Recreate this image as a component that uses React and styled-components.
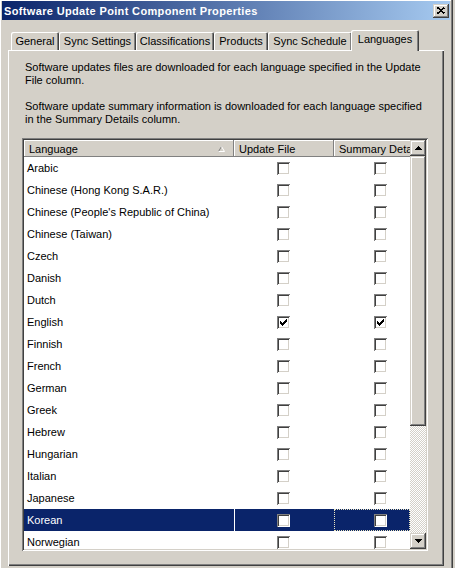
import React from 'react'
import styled, { createGlobalStyle } from 'styled-components'

const GlobalStyle = createGlobalStyle`
  html, body {
    margin: 0;
    padding: 0;
    background: #d4d0c8;
  }
  * {
    box-sizing: border-box;
  }
`

const raised = `
  box-shadow: inset -1px -1px #404040, inset 1px 1px #d4d0c8,
    inset -2px -2px #808080, inset 2px 2px #fff;
`

const Screen = styled.div`
  width: 455px;
  height: 568px;
  overflow: hidden;
  background: #d4d0c8;
  font-family: "Liberation Sans", Arial, sans-serif;
  font-size: 11px;
  color: #000;
`

const Window = styled.div`
  width: 453px;
  height: 100%;
  display: flex;
  flex-direction: column;
  padding: 1px 3px 0 2px;
  box-shadow: inset -1px 0 #404040, inset -2px 0 #808080, inset 1px 1px #fff;
`

const TitleBar = styled.div`
  height: 19px;
  display: flex;
  align-items: center;
  justify-content: space-between;
  padding: 0 1px 0 2px;
  background: linear-gradient(to right, #0a246a, #a6caf0);
`

const Title = styled.span`
  color: #fff;
  font-weight: bold;
  font-size: 11px;
  letter-spacing: 0.35px;
`

const CloseButton = styled.div`
  width: 16px;
  height: 14px;
  background: #d4d0c8;
  display: flex;
  align-items: center;
  justify-content: center;
  ${raised}
`

const TabRow = styled.div`
  display: flex;
  align-items: flex-end;
  height: 21px;
  margin-top: 9px;
  padding-left: 9px;
  position: relative;
  z-index: 1;
`

const Tab = styled.div`
  width: ${p => p.w}px;
  height: ${p => (p.active ? 21 : 18)}px;
  margin-left: ${p => (p.active ? -1 : 0)}px;
  margin-bottom: ${p => (p.active ? -1 : 0)}px;
  display: flex;
  align-items: center;
  justify-content: center;
  padding-bottom: ${p => (p.active ? 3 : 0)}px;
  background: #d4d0c8;
  border-top-left-radius: 2px;
  border-top-right-radius: 2px;
  box-shadow: inset 1px 1px #fff, inset -1px 0 #404040, inset -2px 0 #808080;
`

const Panel = styled.div`
  width: 436px;
  margin-left: 6px;
  flex: 1;
  margin-bottom: 2px;
  padding: 11px 0 0 14px;
  box-shadow: inset 1px 1px #fff, inset -1px -1px #404040, inset -2px -2px #808080;
`

const Para = styled.p`
  margin: 0 0 ${p => p.gap}px 0;
  padding-left: 3px;
  line-height: 13px;
  width: 400px;
`

const ListView = styled.div`
  width: 406px;
  height: 413px;
  display: flex;
  padding: 2px;
  background: #fff;
  box-shadow: inset 1px 1px #808080, inset -1px -1px #fff,
    inset 2px 2px #404040, inset -2px -2px #d4d0c8;
`

const Table = styled.div`
  width: 386px;
  overflow: hidden;
  display: flex;
  flex-direction: column;
`

const HeaderRow = styled.div`
  display: flex;
  height: 17px;
  flex-shrink: 0;
`

const HeaderCell = styled.div`
  width: ${p => p.w}px;
  flex-shrink: 0;
  display: flex;
  align-items: center;
  justify-content: space-between;
  padding: 0 9px 0 5px;
  background: #d4d0c8;
  white-space: nowrap;
  overflow: hidden;
  box-shadow: inset -1px -1px #808080, inset 1px 1px #fff;
`

const Row = styled.div`
  display: flex;
  height: 22px;
  flex-shrink: 0;
`

const Cell = styled.div`
  width: ${p => p.w}px;
  flex-shrink: 0;
  display: flex;
  align-items: center;
  padding-left: ${p => p.pad}px;
  background: ${p => (p.selected ? '#0a246a' : '#fff')};
  color: ${p => (p.selected ? '#fff' : '#000')};
  ${p => (p.divider ? 'box-shadow: inset 1px 0 #fff;' : '')}
  ${p => (p.focus ? 'outline: 1px dotted #e8e4c0; outline-offset: -1px;' : '')}
`

const Box = styled.div`
  width: 13px;
  height: 13px;
  background: #fff;
  position: relative;
  box-shadow: inset 1px 1px #808080, inset -1px -1px #fff,
    inset 2px 2px #404040, inset -2px -2px #d4d0c8;
`

const ScrollBar = styled.div`
  width: 16px;
  display: flex;
  flex-direction: column;
  background: repeating-conic-gradient(#d4d0c8 0 25%, #fff 0 50%) 0 0 / 2px 2px;
`

const ScrollButton = styled.div`
  height: 16px;
  flex-shrink: 0;
  background: #d4d0c8;
  display: flex;
  align-items: center;
  justify-content: center;
  ${raised}
`

const Thumb = styled.div`
  height: 270px;
  flex-shrink: 0;
  background: #d4d0c8;
  ${raised}
`

const Track = styled.div`
  flex: 1;
`

const languages = [
  'Arabic',
  'Chinese (Hong Kong S.A.R.)',
  "Chinese (People's Republic of China)",
  'Chinese (Taiwan)',
  'Czech',
  'Danish',
  'Dutch',
  'English',
  'Finnish',
  'French',
  'German',
  'Greek',
  'Hebrew',
  'Hungarian',
  'Italian',
  'Japanese',
  'Korean',
  'Norwegian',
]

const tabs = [
  ['General', 48],
  ['Sync Settings', 77],
  ['Classifications', 78],
  ['Products', 54],
  ['Sync Schedule', 84],
]

const Check = () => (
  <svg width="7" height="7" viewBox="0 0 7 7" style={{ position: 'absolute', left: 3, top: 3 }} shapeRendering="crispEdges">
    <path
      fill="#000"
      d="M6 0h1v3h-1zM5 1h1v3h-1zM4 2h1v3h-1zM0 2h1v3h-1zM1 3h1v3h-1zM2 4h1v3h-1zM3 3h1v3h-1z"
    />
  </svg>
)

const CheckBox = ({ checked }) => <Box>{checked && <Check />}</Box>

const Arrow = ({ down }) => (
  <svg width="7" height="4" viewBox="0 0 7 4" shapeRendering="crispEdges">
    <path fill="#000" d={down ? 'M0 0h7v1h-7zM1 1h5v1h-5zM2 2h3v1h-3zM3 3h1v1h-1z' : 'M3 0h1v1h-1zM2 1h3v1h-3zM1 2h5v1h-5zM0 3h7v1h-7z'} />
  </svg>
)

export default function App() {
  return (
    <Screen>
      <GlobalStyle />
      <Window>
        <TitleBar>
          <Title>Software Update Point Component Properties</Title>
          <CloseButton>
            <svg width="8" height="7" viewBox="0 0 8 7" shapeRendering="crispEdges">
              <path stroke="#000" strokeWidth="1.6" d="M0.5 0.5L7.5 6.5M7.5 0.5L0.5 6.5" />
            </svg>
          </CloseButton>
        </TitleBar>
        <TabRow>
          {tabs.map(([name, w]) => (
            <Tab key={name} w={w}>{name}</Tab>
          ))}
          <Tab w={68} active>Languages</Tab>
        </TabRow>
        <Panel>
          <Para gap={13}>
            Software updates files are downloaded for each language specified in the Update File column.
          </Para>
          <Para gap={12}>
            Software update summary information is downloaded for each language specified in the Summary Details column.
          </Para>
          <ListView>
            <Table>
              <HeaderRow>
                <HeaderCell w={210}>
                  Language
                  <svg width="7" height="6" viewBox="0 0 7 6">
                    <path d="M0.5 5.5L3.5 0.5" stroke="#808080" fill="none" />
                    <path d="M3.5 0.5L6.5 5.5H0.5" stroke="#fff" fill="none" />
                  </svg>
                </HeaderCell>
                <HeaderCell w={100}>Update File</HeaderCell>
                <HeaderCell w={100}>Summary Details</HeaderCell>
              </HeaderRow>
              {languages.map(lang => {
                const selected = lang === 'Korean'
                const checked = lang === 'English'
                return (
                  <Row key={lang}>
                    <Cell w={210} pad={3} selected={selected}>{lang}</Cell>
                    <Cell w={100} pad={43} selected={selected} divider={selected}>
                      <CheckBox checked={checked} />
                    </Cell>
                    <Cell w={76} pad={40} selected={selected} focus={selected}>
                      <CheckBox checked={checked} />
                    </Cell>
                  </Row>
                )
              })}
            </Table>
            <ScrollBar>
              <ScrollButton><Arrow /></ScrollButton>
              <Thumb />
              <Track />
              <ScrollButton><Arrow down /></ScrollButton>
            </ScrollBar>
          </ListView>
        </Panel>
      </Window>
    </Screen>
  )
}
